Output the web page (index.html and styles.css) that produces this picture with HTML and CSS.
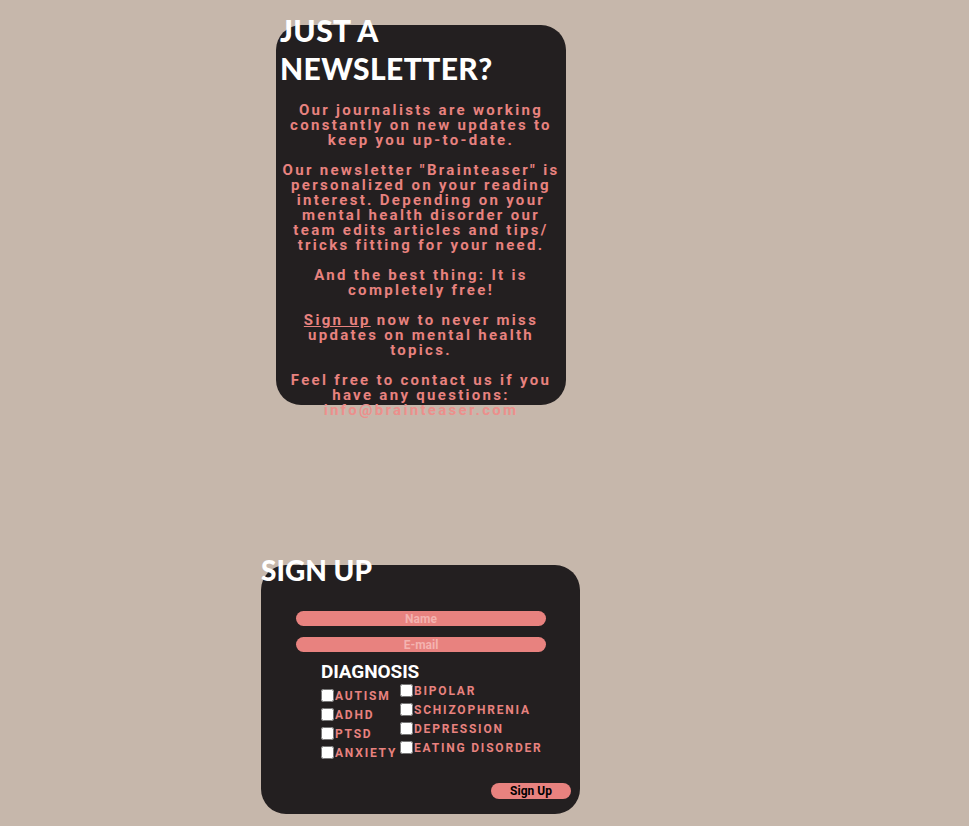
FILE: index.html
```html
<!DOCTYPE html>
<html lang="en">
<head>
<meta charset="utf-8">
<title>Brainteaser Newsletter</title>
<link rel="stylesheet" href="styles.css">
</head>
<body>
<main class="page">
  <section class="news-card">
    <h2 class="news-title">JUST A NEWSLETTER?</h2>
    <p class="news-text">Our journalists are working constantly on new updates to keep you up-to-date.</p>
    <p class="news-text">Our newsletter "Brainteaser" is personalized on your reading interest. Depending on your mental health disorder our team edits articles and tips/ tricks fitting for your need.</p>
    <p class="news-text">And the best thing: It is completely free!</p>
    <p class="news-text"><a class="news-link" href="#signup">Sign up</a> now to never miss updates on mental health topics.</p>
    <p class="news-text">Feel free to contact us if you have any questions: <a class="mail-link" href="#">info@brainteaser.com</a></p>
  </section>

  <section class="signup-card" id="signup">
    <h2 class="signup-title">SIGN UP</h2>
    <form class="signup-form">
      <input class="field" type="text" placeholder="Name">
      <input class="field" type="email" placeholder="E-mail">
      <div class="diagnosis">
        <h3 class="diag-title">DIAGNOSIS</h3>
        <div class="diag-cols">
          <div class="diag-col diag-col-left">
            <label class="opt"><input type="checkbox" class="box">AUTISM</label>
            <label class="opt"><input type="checkbox" class="box">ADHD</label>
            <label class="opt"><input type="checkbox" class="box">PTSD</label>
            <label class="opt"><input type="checkbox" class="box">ANXIETY</label>
          </div>
          <div class="diag-col diag-col-right">
            <label class="opt"><input type="checkbox" class="box">BIPOLAR</label>
            <label class="opt"><input type="checkbox" class="box">SCHIZOPHRENIA</label>
            <label class="opt"><input type="checkbox" class="box">DEPRESSION</label>
            <label class="opt"><input type="checkbox" class="box">EATING DISORDER</label>
          </div>
        </div>
      </div>
      <div class="submit-row">
        <button type="button" class="submit">Sign Up</button>
      </div>
    </form>
  </section>
</main>
</body>
</html>
```

FILE: styles.css
```css
html, body {
  margin: 0;
  padding: 0;
  background: #c6b7ab;
}

.page {
  display: flex;
  flex-direction: column;
  align-items: flex-start;
  padding: 25px 0 0 0;
}

.news-card {
  margin-left: 276px;
  width: 290px;
  height: 380px;
  box-sizing: border-box;
  background: #231f20;
  border-radius: 25px;
  padding: 0 4px;
  text-align: center;
}

.news-title {
  margin: -14px 0 16px 0;
  text-align: left;
  color: #ffffff;
  font-family: "Lato", sans-serif;
  font-weight: 900;
  font-size: 30px;
  line-height: 38px;
  letter-spacing: 0.4px;
}

.news-text {
  margin: 0 0 15px 0;
  color: #e8827f;
  font-family: "Roboto", sans-serif;
  font-weight: 700;
  font-size: 15px;
  line-height: 15px;
  letter-spacing: 2.3px;
}

.news-link {
  color: #e8827f;
  text-decoration: underline;
}

.mail-link {
  color: #ec8f8c;
  text-decoration: none;
}

.signup-card {
  margin: 160px 0 0 261px;
  width: 319px;
  height: 249px;
  box-sizing: border-box;
  background: #231f20;
  border-radius: 25px;
}

.signup-title {
  margin: -10px 0 0 0;
  color: #ffffff;
  font-family: "Lato", sans-serif;
  font-weight: 900;
  font-size: 28px;
  line-height: 30px;
}

.signup-form {
  display: flex;
  flex-direction: column;
  padding: 26px 0 0 35px;
}

.field {
  width: 250px;
  height: 15px;
  box-sizing: border-box;
  border: none;
  border-radius: 8px;
  background: #e8827f;
  margin: 0 0 11px 0;
  padding: 0;
  text-align: center;
  font-family: "Roboto", sans-serif;
  font-weight: 700;
  font-size: 12px;
  color: #f4b3b0;
}

.field::placeholder {
  color: #f4b3b0;
  opacity: 1;
}

.diagnosis {
  margin: -2px 0 0 25px;
}

.diag-title {
  margin: 0;
  color: #ffffff;
  font-family: "Roboto", sans-serif;
  font-weight: 700;
  font-size: 19px;
  line-height: 22px;
  letter-spacing: -0.1px;
}

.diag-cols {
  display: flex;
  align-items: flex-start;
}

.diag-col {
  display: flex;
  flex-direction: column;
}

.diag-col-left {
  width: 79px;
  padding-top: 3px;
}

.diag-col-right {
  padding-top: 0;
  margin-top: -2px;
}

.opt {
  display: flex;
  align-items: center;
  height: 19px;
  color: #e8827f;
  font-family: "Roboto", sans-serif;
  font-weight: 700;
  font-size: 12px;
  letter-spacing: 1.8px;
}

.box {
  width: 13px;
  height: 13px;
  margin: 0 1px 0 0;
}

.submit-row {
  display: flex;
  justify-content: flex-end;
  padding: 21px 9px 0 0;
}

.submit {
  width: 80px;
  height: 16px;
  border: none;
  border-radius: 8px;
  background: #e8827f;
  color: #000000;
  font-family: "Roboto", sans-serif;
  font-weight: 700;
  font-size: 12px;
  line-height: 16px;
  padding: 0;
}
```
